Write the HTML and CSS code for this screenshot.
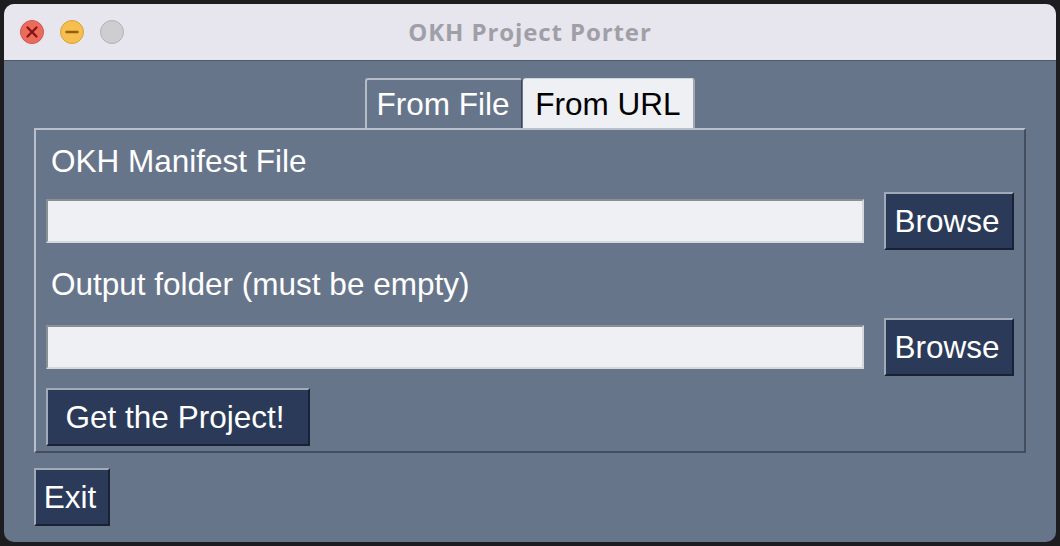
FILE: index.html
```html
<!DOCTYPE html>
<html>
<head>
<meta charset="utf-8">
<link rel="stylesheet" href="styles.css">
</head>
<body>
<div class="window">
  <div class="titlebar">
    <div class="lights">
      <svg class="light" width="24" height="24" viewBox="0 0 24 24"><circle cx="12" cy="12" r="11.5" fill="#ee6a5f" stroke="#d4554b" stroke-width="1"/><path d="M7.5 7.5 L16.5 16.5 M16.5 7.5 L7.5 16.5" stroke="#7d160c" stroke-width="2.2" stroke-linecap="round"/></svg>
      <svg class="light" width="24" height="24" viewBox="0 0 24 24"><circle cx="12" cy="12" r="11.5" fill="#f5bf4f" stroke="#d9a13a" stroke-width="1"/><path d="M6.5 12 L17.5 12" stroke="#9a5b12" stroke-width="2.4" stroke-linecap="round"/></svg>
      <svg class="light" width="24" height="24" viewBox="0 0 24 24"><circle cx="12" cy="12" r="11.5" fill="#cecdd2" stroke="#b2b1b7" stroke-width="1"/></svg>
    </div>
    <div class="title">OKH Project Porter</div>
    <div class="spacer"></div>
  </div>
  <div class="content">
    <div class="tabs">
      <div class="tab active">From File</div>
      <div class="tab other">From URL</div>
    </div>
    <div class="panel">
      <div class="label first">OKH Manifest File</div>
      <div class="row first-row">
        <div class="input"></div>
        <div class="btn browse">Browse</div>
      </div>
      <div class="label second">Output folder (must be empty)</div>
      <div class="row second-row">
        <div class="input"></div>
        <div class="btn browse">Browse</div>
      </div>
      <div class="btn get">Get the Project!</div>
    </div>
    <div class="btn exit">Exit</div>
  </div>
</div>
</body>
</html>
```

FILE: styles.css
```css
* { box-sizing: border-box; }
html, body { margin: 0; padding: 0; }
body {
  background: #1d1d1f;
  width: 1060px;
  height: 546px;
  overflow: hidden;
  font-family: "Liberation Sans", Arial, sans-serif;
}
.window {
  margin: 4px;
  width: 1052px;
  height: 538px;
  border-radius: 10px;
  overflow: hidden;
  background: #67758b;
  display: flex;
  flex-direction: column;
}
.titlebar {
  height: 57px;
  background: #e7e5ed;
  border-bottom: 1px solid #4f596a;
  display: grid;
  grid-template-columns: 1fr auto 1fr;
  align-items: center;
  flex: none;
}
.lights {
  display: flex;
  gap: 16px;
  padding-left: 16px;
  align-items: center;
}
.light { display: block; }
.title {
  font-family: "Open Sans", Inter, sans-serif;
  font-weight: 700;
  font-size: 24px;
  color: #a09fa8;
  letter-spacing: 0.9px;
  padding-bottom: 2px;
}
.content {
  padding: 17px 30px 0 30px;
  display: flex;
  flex-direction: column;
  align-items: flex-start;
  flex: 1;
}
.tabs {
  display: flex;
  gap: 1px;
  align-self: center;
  height: 50px;
}
.tab {
  height: 50px;
  font-size: 31.5px;
  line-height: 36px;
  padding-top: 8px;
  text-align: center;
  border-radius: 3px 3px 0 0;
}
.tab.active {
  width: 157px;
  color: #ffffff;
  border-top: 2px solid #b4bcc8;
  border-left: 2px solid #b4bcc8;
  border-right: 1px solid #3e4757;
  padding-top: 6px;
  padding-right: 2px;
}
.tab.other {
  width: 172px;
  color: #000000;
  background: #eef0f4;
  border-top: 1px solid #d3d6dc;
  border-right: 2px solid #a2a8b1;
  padding-top: 7px;
}
.panel {
  align-self: stretch;
  height: 325px;
  border-top: 2px solid #b9c0cb;
  border-left: 2px solid #b9c0cb;
  border-right: 2px solid #434d5d;
  border-bottom: 2px solid #434d5d;
  padding: 0 10px 5px 10px;
  display: flex;
  flex-direction: column;
  align-items: flex-start;
}
.label {
  font-size: 31.5px;
  line-height: 36px;
  height: 36px;
  color: #ffffff;
  padding-left: 5px;
  white-space: nowrap;
}
.label.first { margin-top: 13px; }
.label.second { margin-top: 16px; }
.row {
  align-self: stretch;
  display: flex;
  align-items: center;
  gap: 20px;
  height: 58px;
}
.first-row { margin-top: 13px; }
.second-row { margin-top: 16px; }
.input {
  flex: 1;
  height: 44px;
  background: #eef0f4;
  border-top: 2px solid #8a8e95;
  border-left: 2px solid #8a8e95;
  border-bottom: 2px solid #d6d8dc;
  border-right: 2px solid #d6d8dc;
}
.btn {
  height: 58px;
  background: #2b3a58;
  color: #ffffff;
  font-size: 31.5px;
  line-height: 54px;
  text-align: center;
  white-space: nowrap;
  border-top: 2px solid #a2aab7;
  border-left: 2px solid #a2aab7;
  border-bottom: 2px solid #1a2133;
  border-right: 2px solid #1a2133;
  flex: none;
}
.browse { width: 130px; padding-right: 4px; }
.get {
  width: 264px;
  margin-top: 12px;
  padding-right: 6px;
}
.exit {
  width: 76px;
  margin-top: 15px;
  padding-right: 4px;
}
```
